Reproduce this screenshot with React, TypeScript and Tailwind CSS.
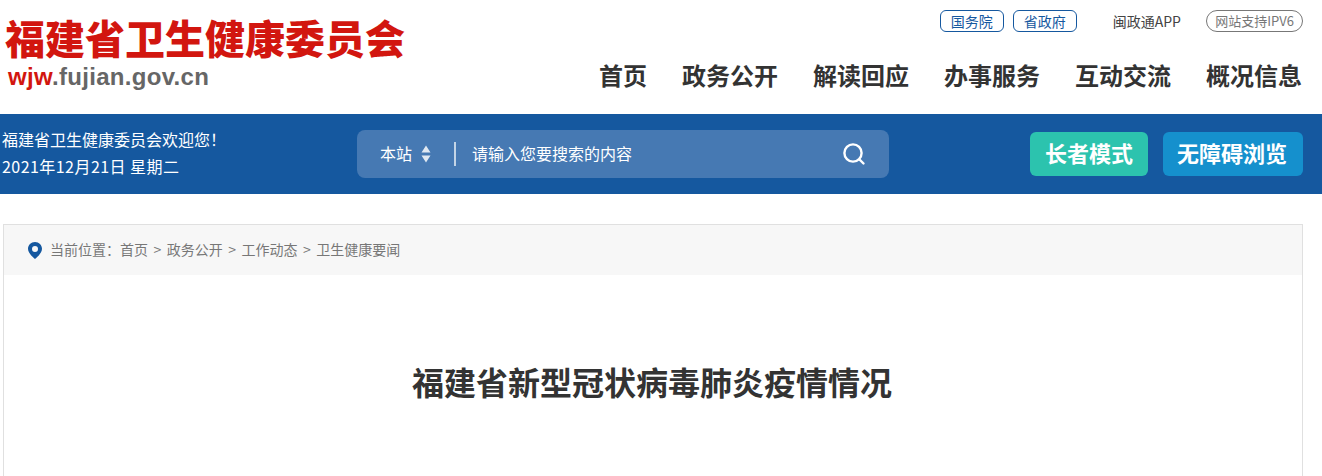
import React from "react";

const font = { fontFamily: '"Noto Sans CJK SC", "Liberation Sans", sans-serif' };

const nav = ["首页", "政务公开", "解读回应", "办事服务", "互动交流", "概况信息"];
const crumbs = ["首页", "政务公开", "工作动态", "卫生健康要闻"];

export default function App() {
  return (
    <div style={font} className="h-[476px] w-[1322px] overflow-hidden bg-white text-[#333]">
      <header className="flex h-[114px] w-[1303px] justify-between">
        <div className="pl-[5px] pt-[13px]">
          <div className="h-[48px] whitespace-nowrap text-[40px] font-black leading-[48px] text-[#d2160f]">福建省卫生健康委员会</div>
          <div className="mt-[1px] pl-[3px] text-[24px] font-bold leading-[30px] tracking-[0.3px] text-[#666]" style={{ fontFamily: '"Liberation Sans", sans-serif' }}>
            <span className="text-[#d2160f]">wjw</span>.fujian.gov.cn
          </div>
        </div>
        <div className="flex flex-col items-end">
          <div className="mt-[10px] flex h-[22px] items-center text-[14px]">
            <a className="flex h-[22px] w-[64px] items-center justify-center rounded-[6px] border border-[#15589f] text-[#15589f]">国务院</a>
            <a className="ml-[9px] flex h-[22px] w-[64px] items-center justify-center rounded-[6px] border border-[#15589f] text-[#15589f]">省政府</a>
            <span className="ml-[36px] text-[#444]">闽政通APP</span>
            <a className="ml-[25px] flex h-[22px] w-[97px] items-center justify-center rounded-full border border-[#777] text-[13px] text-[#777]">网站支持IPV6</a>
          </div>
          <nav className="mr-[1px] mt-[25px] flex gap-[35px] text-[24px] font-bold leading-[36px] text-[#333]">
            {nav.map((n) => (
              <a key={n}>{n}</a>
            ))}
          </nav>
        </div>
      </header>

      <div className="h-[80px] bg-[#15589f]">
        <div className="flex h-full w-[1303px] items-center pl-[2px] text-white">
          <div className="w-[355px] pb-[2px] text-[16px] leading-[27px]">
            <div>福建省卫生健康委员会欢迎您！</div>
            <div className="tracking-[0.45px]">2021年12月21日 星期二</div>
          </div>
          <div className="flex h-[48px] w-[532px] items-center rounded-[8px] bg-[#4679b3] px-[23px] text-[16px]">
            <span className="pb-[2px]">本站</span>
            <svg width="10" height="18" viewBox="0 0 10 18" className="ml-[9px]" fill="#dfe8f2">
              <path d="M5 0.5 L9.5 7.5 H0.5 Z M0.5 10.5 H9.5 L5 17.5 Z" />
            </svg>
            <div className="ml-[23px] h-[24px] w-[2px] bg-[#c3d4e6]" />
            <span className="ml-[16px] flex-1 pb-[2px]">请输入您要搜索的内容</span>
            <svg width="24" height="24" viewBox="0 0 24 24" fill="none" stroke="white" strokeWidth="2.4" strokeLinecap="round">
              <circle cx="11" cy="11" r="8.6" />
              <path d="M17.5 17.5 L21.5 21.5" />
            </svg>
          </div>
          <div className="ml-auto flex gap-[15px] text-[22px] font-bold">
            <a className="flex h-[44px] w-[118px] items-center justify-center rounded-[6px] bg-[#2cc3ae] pb-[3px]">长者模式</a>
            <a className="flex h-[44px] w-[140px] items-center justify-center rounded-[6px] bg-[#1590cd] pb-[3px] pr-[2px]">无障碍浏览</a>
          </div>
        </div>
      </div>

      <main className="ml-[3px] mt-[30px] h-[300px] w-[1300px] border border-[#e0e0e0]">
        <div className="flex h-[50px] items-center bg-[#f7f7f7] pb-[2px] pl-[24px] text-[14px] text-[#777]">
          <svg width="14" height="17" viewBox="0 0 14 17" fill="#15589f" className="mt-[2px]">
            <path fillRule="evenodd" d="M7 0 C3 0 0 3 0 6.8 C0 11 4.5 15 7 17 C9.5 15 14 11 14 6.8 C14 3 11 0 7 0 Z M7 4 A3 3 0 1 1 7 10 A3 3 0 1 1 7 4 Z" />
          </svg>
          <span className="ml-[8px]">当前位置：</span>
          {crumbs.map((c, i) => (
            <React.Fragment key={c}>
              {i > 0 && <span className="mx-[5.5px]">&gt;</span>}
              <span>{c}</span>
            </React.Fragment>
          ))}
        </div>
        <h1 className="mt-[82px] pr-[2px] text-center text-[32px] font-bold leading-[48px] text-[#333]">福建省新型冠状病毒肺炎疫情情况</h1>
      </main>
    </div>
  );
}
